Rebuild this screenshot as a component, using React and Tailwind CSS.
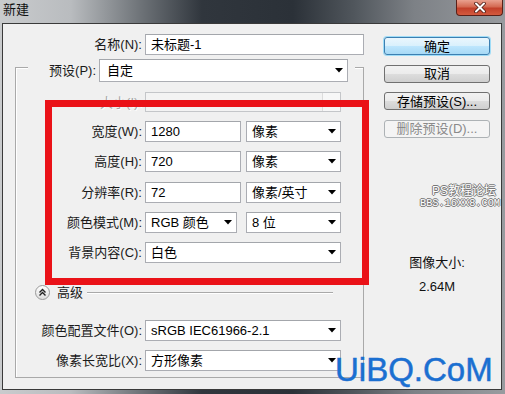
import React from 'react';

const Arrow = ({ color = '#000' }) => (
  <svg width="8" height="5" viewBox="0 0 8 5" className="shrink-0">
    <path d="M0 0H8L4 4.5Z" fill={color} />
  </svg>
);

// white text box / combo box, Win7 look
const Field = ({ className = '', arrow = false, children }) => (
  <div
    className={`flex items-center justify-between bg-white border border-[#abadb3] border-t-[#a3a6ab] pl-[5px] pr-[4px] text-[13px] leading-none text-black ${className}`}
  >
    <span>{children}</span>
    {arrow && <Arrow />}
  </div>
);

const Label = ({ className = '', children }) => (
  <div className={`shrink-0 text-right text-[13px] leading-none text-[#1a1a1a] ${className}`}>{children}</div>
);

const Button = ({ kind = 'normal', children }) => {
  const styles = {
    default:
      'border-[#3c7fb1] bg-[linear-gradient(#eaf6fd_0%,#d9f0fc_50%,#bee6fd_50%,#a7d9f5_100%)] shadow-[0_0_0_1px_#9fdcf7] text-black',
    normal:
      'border-[#707070] bg-[linear-gradient(#f2f2f2_0%,#ebebeb_50%,#dddddd_50%,#cfcfcf_100%)] text-black',
    disabled: 'border-[#adb2b5] bg-[#f4f4f4] text-[#8a8a8a]',
  };
  return (
    <div
      className={`flex h-[18px] w-[106px] items-center justify-center rounded-[3px] border text-[13px] leading-none ${styles[kind]}`}
    >
      {children}
    </div>
  );
};

export default function App() {
  return (
    <div className="relative h-[394px] w-[505px] overflow-hidden bg-[linear-gradient(90deg,#c9cbcd_0%,#b9bcbf_14%,#6d7277_28%,#30363d_40%,#2b3138_58%,#50565c_70%,#7d8186_82%,#989b9f_100%)] font-['Liberation_Sans','Noto_Sans_CJK_SC',sans-serif]">
      {/* title bar */}
      <div className="flex h-[23px] items-start justify-between">
        <div className="pl-[3px] pt-[3px] text-[13px] leading-[14px] text-[#111]">新建</div>
        <div className="mr-[2px] flex h-[16px] w-[47px] items-center justify-center rounded-b-[4px] border border-t-0 border-[#5a2018] bg-[linear-gradient(#e9a18f_0%,#d46a52_45%,#c2402a_55%,#d45a3e_100%)]">
          <svg width="14" height="11" viewBox="0 0 14 11">
            <path d="M3 1.5L11 9.5M11 1.5L3 9.5" stroke="#4a1a12" strokeWidth="3.6" strokeLinecap="round" />
            <path d="M3 1.5L11 9.5M11 1.5L3 9.5" stroke="#fff" strokeWidth="2" strokeLinecap="round" />
          </svg>
        </div>
      </div>

      {/* client area */}
      <div className="ml-[2px] flex h-[367px] w-[500px] border border-[#3a3a3a] bg-[#f0f0f0]">
        {/* left column */}
        <div className="w-[367px] shrink-0 pt-[10px]">
          <div className="flex items-center gap-[3px]">
            <Label className="w-[139px]">名称(N):</Label>
            <Field className="h-[21px] w-[219px]">未标题-1</Field>
          </div>

          {/* preset group */}
          <div className="ml-[12px] mt-[12px] w-[349px] border border-[#a9a9a9] pb-[6px] shadow-[inset_1px_1px_0_#fff]">
            <div className="-mt-[9px] ml-[12px] flex w-fit items-center gap-[3px] bg-[#f0f0f0] pr-[7px]">
              <Label className="w-[68px]">预设(P):</Label>
              <Field arrow className="h-[23px] w-[249px] pl-[7px]">自定</Field>
            </div>

            <div className="mt-[10px] flex items-center gap-[3px]">
              <Label className="w-[126px] text-[#a6a6a6] [text-shadow:1px_1px_0_#fff]">大小(I):</Label>
              <div className="flex h-[20px] w-[196px] border border-[#c4c6c9] bg-[#f3f3f3]">
                <div className="flex-1" />
                <div className="w-[18px] border-l border-[#dcdcdc] bg-[#f7f7f7]" />
              </div>
            </div>

            {/* red annotation box */}
            <div className="relative z-10 -mt-[12px] ml-[29px] flex w-[324px] flex-col gap-[9.25px] border-[7px] border-[#ea1218] pb-[15px] pt-[14px]">
              <div className="flex items-center gap-[3px]">
                <Label className="w-[90px]">宽度(W):</Label>
                <Field className="h-[21px] w-[96px]">1280</Field>
                <Field arrow className="ml-[2px] h-[21px] w-[95px]">像素</Field>
              </div>
              <div className="flex items-center gap-[3px]">
                <Label className="w-[90px]">高度(H):</Label>
                <Field className="h-[21px] w-[96px]">720</Field>
                <Field arrow className="ml-[2px] h-[21px] w-[95px]">像素</Field>
              </div>
              <div className="flex items-center gap-[3px]">
                <Label className="w-[90px]">分辨率(R):</Label>
                <Field className="h-[21px] w-[96px]">72</Field>
                <Field arrow className="ml-[2px] h-[21px] w-[95px]">像素/英寸</Field>
              </div>
              <div className="flex items-center gap-[3px]">
                <Label className="w-[90px]">颜色模式(M):</Label>
                <Field arrow className="h-[21px] w-[92px]">RGB 颜色</Field>
                <Field arrow className="ml-[6px] h-[21px] w-[95px]">8 位</Field>
              </div>
              <div className="flex items-center gap-[3px]">
                <Label className="w-[90px]">背景内容(C):</Label>
                <Field arrow className="h-[21px] w-[196px]">白色</Field>
              </div>
            </div>

            {/* advanced */}
            <div className="ml-[19px] flex h-[15px] items-center">
              <div className="flex h-[15px] w-[15px] items-center justify-center rounded-full border border-[#9a9a9a] bg-[linear-gradient(#ffffff,#dedede)]">
                <svg width="9" height="9" viewBox="0 0 9 9">
                  <path d="M1.5 4.5L4.5 1.5L7.5 4.5M1.5 7.5L4.5 4.5L7.5 7.5" fill="none" stroke="#222" strokeWidth="1.4" />
                </svg>
              </div>
              <div className="ml-[7px] text-[13px] leading-none text-[#1a1a1a]">高级</div>
              <div className="ml-[4px] h-[2px] w-[246px] border-t border-[#a9a9a9] border-b border-b-white" />
            </div>

            <div className="mt-[20px] flex items-center gap-[3px]">
              <Label className="w-[126px]">颜色配置文件(O):</Label>
              <Field arrow className="h-[21px] w-[196px]">sRGB IEC61966-2.1</Field>
            </div>
            <div className="mt-[9px] flex items-center gap-[3px]">
              <Label className="w-[126px]">像素长宽比(X):</Label>
              <Field arrow className="h-[21px] w-[196px]">方形像素</Field>
            </div>
          </div>
        </div>

        {/* right column */}
        <div className="ml-[14px] flex w-[106px] flex-col pt-[13px]">
          <div className="flex flex-col gap-[9.5px]">
            <Button kind="default">确定</Button>
            <Button>取消</Button>
            <Button>存储预设(S)...</Button>
            <Button kind="disabled">删除预设(D)...</Button>
          </div>
          <div className="mt-[117px] text-center text-[13px] leading-[16px] text-[#111]">图像大小:</div>
          <div className="mt-[8px] text-center text-[13px] leading-[16px] text-[#111]">2.64M</div>
        </div>
      </div>

      {/* watermarks */}
      <div className="absolute left-[432px] top-[185px] text-[12px] leading-[12px] text-white [text-shadow:1px_0_0_#777,-1px_0_0_#777,0_1px_0_#777,0_-1px_0_#777]">
        PS教程论坛
      </div>
      <div className="absolute left-[420px] top-[198px] font-['Liberation_Mono',monospace] text-[10.25px] leading-[11px] text-white [text-shadow:1px_0_0_#777,-1px_0_0_#777,0_1px_0_#777,0_-1px_0_#777]">
        BBS.16XX8.COM
      </div>
      <div className="absolute left-[335px] top-[353px] text-[33px] leading-none text-[#1b6fd1] [-webkit-text-stroke:0.5px_#1b6fd1]">UiBQ.CoM</div>
    </div>
  );
}
